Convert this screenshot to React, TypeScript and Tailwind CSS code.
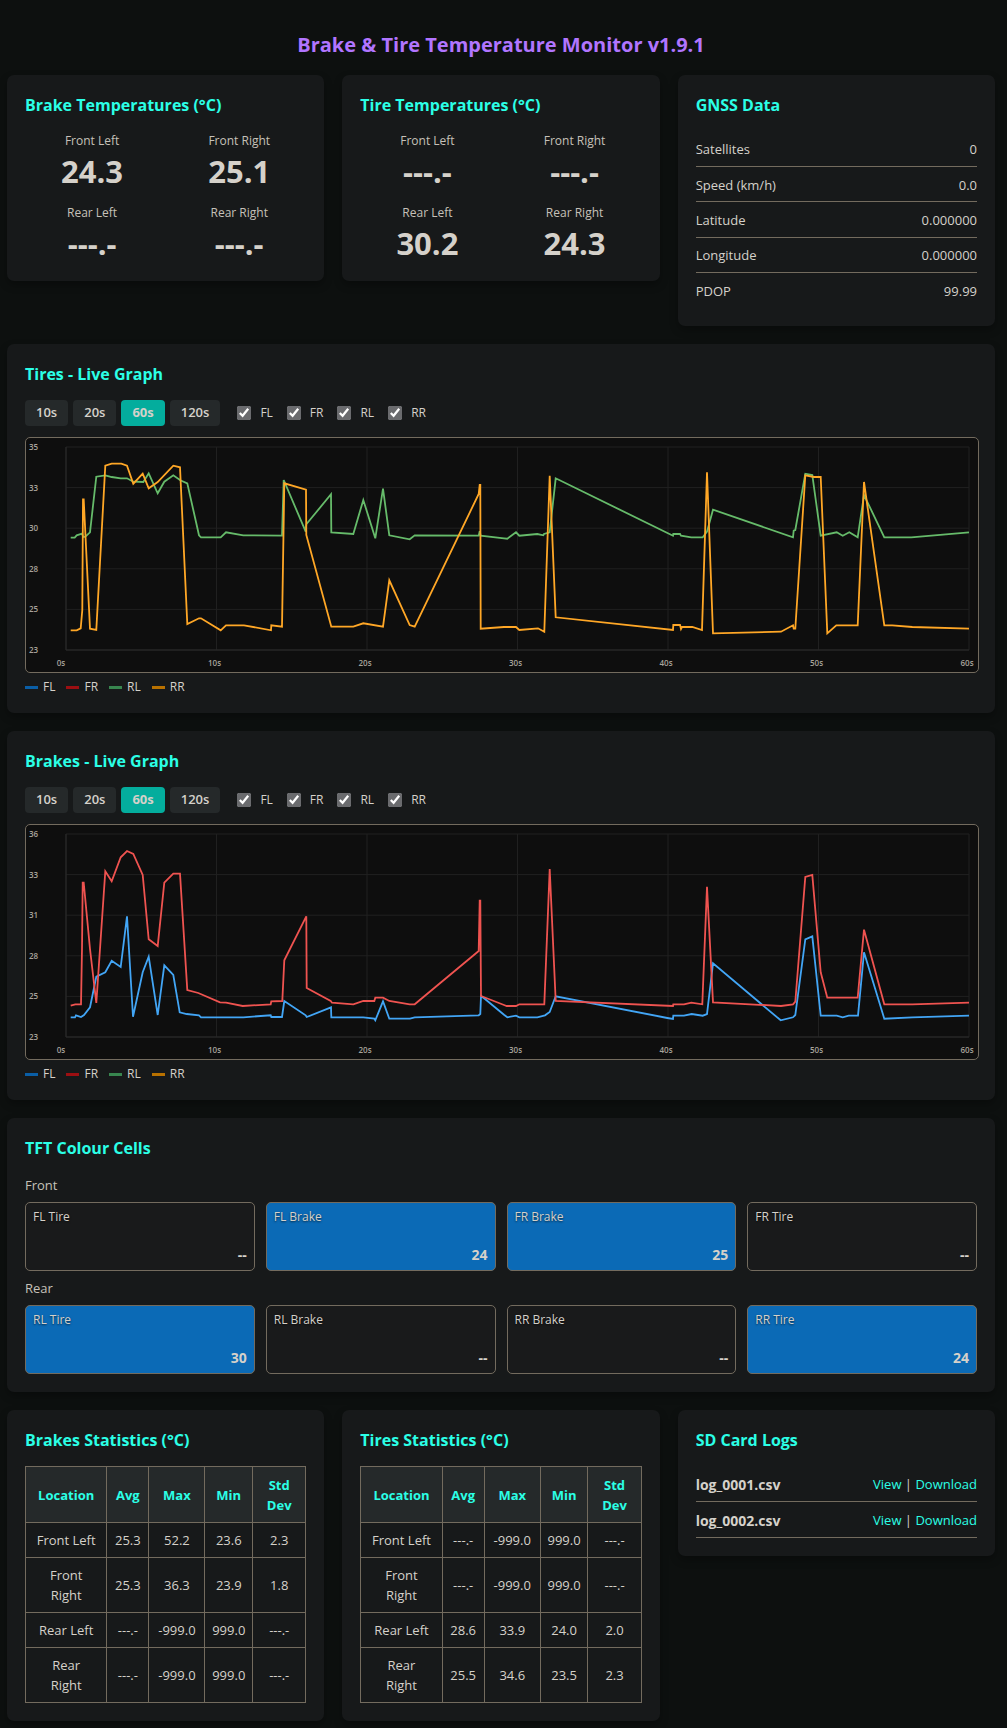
import React, { useState } from "react";

const ranges = ["10s", "20s", "60s", "120s"];
const corners = ["FL", "FR", "RL", "RR"];
const legendColors = ["bg-[#0a5ea6]", "bg-[#9c0f12]", "bg-[#38864f]", "bg-[#b87100]"];

const tireRL =
  "44.7,99.7 48.7,99.7 50.7,97.3 56,95.7 57.3,99 59.3,98.7 64,94.3 70.3,38.7 79.3,37.3 85.7,39 94.7,40.3 101,40.3 107.3,43.7 117.3,44 122.7,35.3 131.7,55.3 138.3,43.7 147.3,37.3 154.3,42.3 161.3,45.3 173,97.3 175,99.3 194.7,99.3 200,94.3 217.3,97.3 256,97.7 257.7,42 279.7,93.7 280.3,86.3 305,56.3 305.3,94.3 327.3,96 337.3,62 349.3,100.3 357,50.7 363.3,97.3 383.7,101.3 388.7,97.3 452.7,97.7 453.7,93.3 454.7,97.7 478,100.3 481.3,100.7 490,94.3 493.3,97.7 511.3,96 517.3,97.3 518,96 523.7,94.3 529.7,40.3 647,97.7 647.3,96 654,96 655,97.7 665.3,99.3 676.7,99.3 681,93.7 687,71.7 767,99.3 767.7,92.7 769.3,92 779.3,35.7 786.3,37 794.7,97.7 810.7,94.3 816.7,97.7 823.3,94.3 831.7,99.3 838,57 858.3,99.3 885.3,99.3 943,94.3";
const tireRR =
  "44.7,192.3 50.7,192.3 54.7,190.3 56.3,172 57,61.3 57.7,61.3 64,190.7 70.3,192 79.3,27.7 85.7,25.7 95.3,25.7 101,27.7 107.3,45.7 116.7,35.7 122.7,50.3 131.7,44 147.3,27.7 154,29.3 161.3,186 173,180.3 175,180.3 194.7,192.3 200,187.3 218,187.3 245,192.3 245.3,187.3 256,188.7 258.3,45.3 280,51.7 280.3,97 305.3,188.7 327.3,188.7 337.3,185.3 357,188.7 363.3,142.3 383.7,187 388.7,188.7 452.7,56 453.7,47 454.3,47 454.7,190.7 478,189 490,189 493.3,192 512,190.3 518.3,193.7 523.7,37.7 529.7,179.3 647,192 647.3,187 654,187 655,191 656,189 666.3,189 676,192 681,34.3 687,195.3 755,193.7 767,187.3 767.7,190.7 769.3,190.7 779.3,37.3 788,39 794.7,39 801.3,195.3 810.3,187.3 831.7,187.3 838,44 858.3,187.3 866.3,187.3 886.3,189 943,190.7";
const brakeFR =
  "44.7,180.7 49.3,179.3 55,179.3 56,124 56.7,57.7 57.7,57.7 64,124 70.3,178 79.3,46.3 85.7,56.3 94.7,32.3 101,26 107.3,29 116.7,50 122.7,114.3 131.7,121 138.3,57.7 147.3,48.7 154,48.7 161.3,165 172.3,168 194,177.3 200,177.7 216.7,181 244.7,179.3 245.3,176.3 256.3,176 258.3,135.3 280.3,91.3 280.7,163 304.7,176 306,177.7 327.3,179.3 337.3,176 348.3,176 349.3,172.7 357,172.7 363.3,176 383.7,179.3 388.7,179.3 452.7,126 453.7,75.7 454.3,75.7 455,171 478,180 480.7,181 490,181 493.3,179.3 518.3,179.3 523.7,44 529.7,176 647,181 647.3,179.3 658,179.3 665.3,177.7 676.3,179.3 681,61.7 687,177.3 755,181 767,179.3 769.3,176.7 779.3,52 786.3,50 794.7,147.3 801.3,172.7 831.7,172.7 838,104.7 858.3,179.3 886.3,179.3 943,177.7";
const brakeFL =
  "44.7,192.3 49,192.3 50,190.3 55,192 58,190 64,182.3 70.3,151.7 79.3,147.3 85.7,135.7 94.7,142 101,91.3 107,191.7 116.7,147.3 122.7,131.7 131.7,190 138.3,140.3 147.3,150 153.7,187.3 160.7,189 173,190.3 175,192.3 217.3,192.3 244.7,190.3 245.3,192 256,192 258.3,176 279.7,190.3 280.7,192 305,182.3 305.3,192.3 337.3,192.3 348.3,193.7 349.3,195.3 357,176.3 363.3,193.7 384,193.7 388.7,192.3 452.7,190.3 454.3,189 455,171 459,174 478,189.7 481.3,192.3 490,190.7 493.3,192.3 511.3,192.3 519,190.3 523.7,187 529.7,171.3 641.3,193 647,194 647.3,190.7 658,190.7 665.7,189 676.7,190.7 681,189 687,138.3 754.7,195.3 767,192.3 769.3,190 779.3,114.3 786.3,111.3 794.7,190.7 810.7,190.7 816.7,192.3 822.7,190.7 832,190.7 838,127.3 858.3,193.7 886.3,192.3 943,190.7";

const Card = ({ title, children }: { title: string; children: React.ReactNode }) => (
  <section className="min-w-0 rounded-[7px] bg-[#17191a] p-[18px] shadow-[0_4px_8px_rgba(0,0,0,0.3)]">
    <h2 className="mb-3.5 text-[16px] leading-6 font-bold text-[#2bffe6]">{title}</h2>
    {children}
  </section>
);

const Temps = ({ values }: { values: string[] }) => (
  <div className="grid grid-cols-2 gap-x-[13px] gap-y-3 text-center">
    {["Front Left", "Front Right", "Rear Left", "Rear Right"].map((name, i) => (
      <div key={name}>
        <div className="text-[12px] leading-5 text-[#c6c1b9]">{name}</div>
        <div className="text-[31px] leading-10 font-bold">{values[i]}</div>
      </div>
    ))}
  </div>
);

type Line = { name: string; color: string; points: string };

const Chart = ({ labels, lines }: { labels: string[]; lines: Line[] }) => (
  <div className="-mr-0.5 overflow-hidden rounded-[5px] border border-[#736b5e] bg-[#0e0e0e]">
    <svg viewBox="0 0 952 234" className="block w-full">
      <g stroke="#202020" strokeWidth="1">
        {labels.map((label, i) => (
          <line key={label} x1="40" x2="943" y1={9 + i * 40.6} y2={9 + i * 40.6} />
        ))}
        {[0, 1, 2, 3, 4, 5, 6].map((i) => (
          <line key={i} x1={40 + i * 150.5} x2={40 + i * 150.5} y1="9" y2="212" />
        ))}
      </g>
      <path d="M40 9V212H943" fill="none" stroke="#2a2a2a" />
      <g fill="#a8a39b" fontSize="8" fontWeight="600">
        {labels.map((label, i) => (
          <text key={label} x="3" y={12 + i * 40.6}>
            {label}
          </text>
        ))}
        {[0, 1, 2, 3, 4, 5, 6].map((i) => (
          <text key={i} x={i === 0 ? 35 : 38 + i * 150.5} y="228" textAnchor="middle">
            {i * 10}s
          </text>
        ))}
      </g>
      {lines.map((line) => (
        <polyline
          key={line.name}
          points={line.points}
          fill="none"
          stroke={line.color}
          strokeWidth="1.8"
        />
      ))}
    </svg>
  </div>
);

const GraphCard = ({ title, labels, lines }: { title: string; labels: string[]; lines: Line[] }) => {
  const [range, setRange] = useState("60s");
  const [shown, setShown] = useState(corners);

  const toggle = (name: string) => {
    setShown(shown.includes(name) ? shown.filter((s) => s !== name) : [...shown, name]);
  };

  return (
    <Card title={title}>
      <div className="mb-[11px] flex flex-wrap items-center">
        <div className="mr-[17px] flex gap-[5px]">
          {ranges.map((r) => (
            <button
              key={r}
              onClick={() => setRange(r)}
              className={
                r === range
                  ? "h-[26px] cursor-pointer rounded-[4px] bg-[#04ad9d] px-[11px] text-[13px] font-bold"
                  : "h-[26px] cursor-pointer rounded-[4px] bg-[#25292a] px-[11px] text-[13px] font-semibold"
              }
            >
              {r}
            </button>
          ))}
        </div>
        <div className="flex gap-3.5">
          {corners.map((c) => (
            <label key={c} className="flex items-center gap-[9px] text-[12px] leading-5">
              <input
                type="checkbox"
                checked={shown.includes(c)}
                onChange={() => toggle(c)}
                className="size-3.5 accent-[#6a6b6e]"
              />
              {c}
            </label>
          ))}
        </div>
      </div>
      <Chart labels={labels} lines={lines.filter((l) => shown.includes(l.name))} />
      <div className="mt-1.5 flex gap-[11px] text-[12px] leading-4">
        {corners.map((c, i) => (
          <div key={c} className="flex items-center gap-[5px]">
            <span className={`h-[3px] w-[13px] ${legendColors[i]}`}></span>
            {c}
          </div>
        ))}
      </div>
    </Card>
  );
};

const CellRow = ({ title, cells }: { title: string; cells: string[][] }) => (
  <div>
    <div className="mb-[5px] text-[13px] leading-[23px] text-[#c6c1b9]">{title}</div>
    <div className="grid grid-cols-4 gap-[11px]">
      {cells.map(([name, value]) => (
        <div
          key={name}
          className={
            value === "--"
              ? "flex min-h-[69px] flex-col justify-between rounded-[5px] border border-[#736b5e] bg-[#191a1b] px-[7px] py-1.5"
              : "flex min-h-[69px] flex-col justify-between rounded-[5px] border border-[#736b5e] bg-[#0b6ab6] px-[7px] py-1.5"
          }
        >
          <span className="text-[12px] leading-4 [text-shadow:0_1px_2px_rgba(0,0,0,0.6)]">{name}</span>
          <span className="text-right text-[14px] leading-[18px] font-bold">{value}</span>
        </div>
      ))}
    </div>
  </div>
);

const StatsTable = ({ rows }: { rows: string[][] }) => (
  <table className="w-full table-fixed border-collapse text-center text-[13px] leading-5">
    <colgroup>
      <col />
      <col className="w-[15%]" />
      <col className="w-[20%]" />
      <col className="w-[17%]" />
      <col className="w-[19%]" />
    </colgroup>
    <thead>
      <tr className="bg-[#25292a] text-[#2bffe6]">
        {["Location", "Avg", "Max", "Min", "Std Dev"].map((h) => (
          <th key={h} className="border border-[#736b5e] px-1.5 pt-2 pb-[7px] font-bold">
            {h}
          </th>
        ))}
      </tr>
    </thead>
    <tbody>
      {rows.map((row) => (
        <tr key={row[0]}>
          {row.map((cell, i) => (
            <td key={i} className="border border-[#736b5e] px-1.5 py-[7px] first:px-2.5">
              {cell}
            </td>
          ))}
        </tr>
      ))}
    </tbody>
  </table>
);

const gnss = [
  ["Satellites", "0"],
  ["Speed (km/h)", "0.0"],
  ["Latitude", "0.000000"],
  ["Longitude", "0.000000"],
  ["PDOP", "99.99"],
];

const App = () => {
  return (
    <div className="min-h-screen bg-[#0d100f] pt-[29px] pr-3 pb-1 pl-[7px] font-['Open_Sans','Noto_Sans',sans-serif] text-[#d5d1ca]">
      <h1 className="mb-3.5 text-center text-[20px] leading-8 font-bold text-[#b175ff]">
        Brake &amp; Tire Temperature Monitor v1.9.1
      </h1>
      <main className="flex flex-col gap-[18px]">
        <div className="grid grid-cols-3 items-start gap-[18px]">
          <Card title="Brake Temperatures (°C)">
            <Temps values={["24.3", "25.1", "---.-", "---.-"]} />
          </Card>
          <Card title="Tire Temperatures (°C)">
            <Temps values={["---.-", "---.-", "30.2", "24.3"]} />
          </Card>
          <Card title="GNSS Data">
            <dl className="grid min-h-[177px] auto-rows-fr pt-px text-[13px]">
              {gnss.map(([name, value]) => (
                <div
                  key={name}
                  className="flex items-center justify-between border-b border-[#736b5e] pt-0.5 last:border-b-0"
                >
                  <dt>{name}</dt>
                  <dd>{value}</dd>
                </div>
              ))}
            </dl>
          </Card>
        </div>

        <GraphCard
          title="Tires - Live Graph"
          labels={["35", "33", "30", "28", "25", "23"]}
          lines={[
            { name: "RL", color: "#66bb6a", points: tireRL },
            { name: "RR", color: "#ffa726", points: tireRR },
          ]}
        />
        <GraphCard
          title="Brakes - Live Graph"
          labels={["36", "33", "31", "28", "25", "23"]}
          lines={[
            { name: "FL", color: "#42a5f5", points: brakeFL },
            { name: "FR", color: "#ef5350", points: brakeFR },
          ]}
        />

        <Card title="TFT Colour Cells">
          <div className="flex flex-col gap-1.5">
            <CellRow
              title="Front"
              cells={[
                ["FL Tire", "--"],
                ["FL Brake", "24"],
                ["FR Brake", "25"],
                ["FR Tire", "--"],
              ]}
            />
            <CellRow
              title="Rear"
              cells={[
                ["RL Tire", "30"],
                ["RL Brake", "--"],
                ["RR Brake", "--"],
                ["RR Tire", "24"],
              ]}
            />
          </div>
        </Card>

        <div className="grid grid-cols-3 items-start gap-[18px]">
          <Card title="Brakes Statistics (°C)">
            <StatsTable
              rows={[
                ["Front Left", "25.3", "52.2", "23.6", "2.3"],
                ["Front Right", "25.3", "36.3", "23.9", "1.8"],
                ["Rear Left", "---.-", "-999.0", "999.0", "---.-"],
                ["Rear Right", "---.-", "-999.0", "999.0", "---.-"],
              ]}
            />
          </Card>
          <Card title="Tires Statistics (°C)">
            <StatsTable
              rows={[
                ["Front Left", "---.-", "-999.0", "999.0", "---.-"],
                ["Front Right", "---.-", "-999.0", "999.0", "---.-"],
                ["Rear Left", "28.6", "33.9", "24.0", "2.0"],
                ["Rear Right", "25.5", "34.6", "23.5", "2.3"],
              ]}
            />
          </Card>
          <Card title="SD Card Logs">
            <ul className="text-[13px] leading-[21px]">
              {["log_0001.csv", "log_0002.csv"].map((log) => (
                <li key={log} className="flex justify-between border-b border-[#736b5e] pt-2 pb-1.5">
                  <strong className="text-[14px]">{log}</strong>
                  <span>
                    <a href={`/view?file=${log}`} className="text-[#2bffe6]">
                      View
                    </a>{" "}
                    |{" "}
                    <a href={`/download?file=${log}`} className="text-[#2bffe6]">
                      Download
                    </a>
                  </span>
                </li>
              ))}
            </ul>
          </Card>
        </div>
      </main>
    </div>
  );
};

export default App;
